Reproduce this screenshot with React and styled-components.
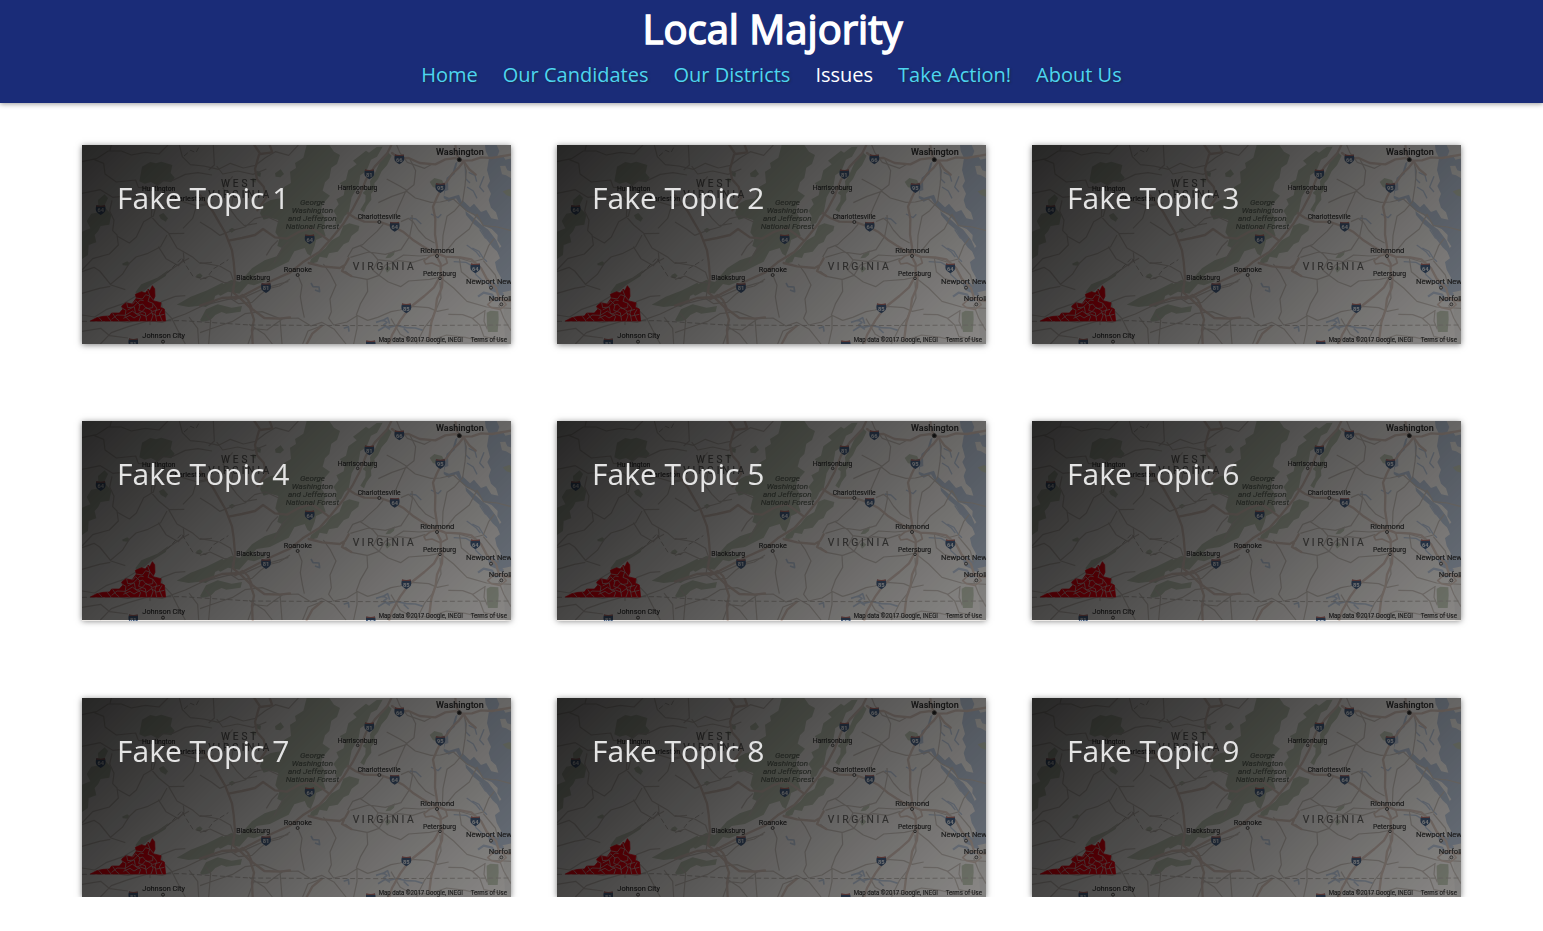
import React from 'react';
import styled, { createGlobalStyle } from 'styled-components';

const GlobalStyle = createGlobalStyle`
  *, *::before, *::after { box-sizing: border-box; }
  body {
    margin: 0;
    background: #fff;
    font-family: 'Open Sans', 'Noto Sans', sans-serif;
    overflow: hidden;
  }
`;

const Header = styled.header`
  display: flex;
  flex-direction: column;
  align-items: center;
  height: 103px;
  background: #1a2c78;
  box-shadow: 0 1px 5px rgba(0, 0, 0, 0.4);
`;

const SiteTitle = styled.h1`
  margin: 0;
  padding-left: 2px;
  font-size: 40px;
  font-weight: 400;
  line-height: 58px;
  color: #fff;
  -webkit-text-stroke: 1.5px #fff;
`;

const Nav = styled.nav`
  display: flex;
  gap: 25px;
  padding-top: 3px;
`;

const NavLink = styled.a`
  font-size: 20px;
  line-height: 28px;
  text-decoration: none;
  color: ${({ $active }) => ($active ? '#fff' : '#4dd5f0')};
  text-shadow: ${({ $active }) => ($active ? 'none' : '1px 1px 2px rgba(30, 40, 50, 0.7)')};
`;

const TopicGrid = styled.main`
  display: grid;
  grid-template-columns: repeat(3, 429px);
  justify-content: center;
  column-gap: 46px;
  row-gap: 77.4px;
  padding-top: 42px;
`;

const TopicCard = styled.article`
  display: grid;
  grid-template-rows: 199px;
  height: 199px;
  box-shadow: 0 1px 6px rgba(0, 0, 0, 0.5);

  & > * { grid-area: 1 / 1; }
`;

const MapImage = styled.svg`
  display: block;
  width: 429px;
  height: ${({ $height }) => $height}px;
  overflow: hidden;
`;

const MapInk = styled.g`
  filter: blur(0.9px);
`;

const Shade = styled.div`
  z-index: 1;
  padding: 32px 35px;
  background: linear-gradient(135deg, rgba(0, 0, 0, 0.84), rgba(0, 0, 0, 0.42));
`;

const TopicName = styled.h2`
  margin: 0;
  font-size: 30px;
  font-weight: 400;
  line-height: 42px;
  color: #e4e4e4;
`;

const MapLabel = styled.text`
  font-family: Roboto, sans-serif;
  font-size: ${({ $size = 22.5 }) => $size}px;
  font-weight: ${({ $bold }) => ($bold ? 500 : 400)};
  font-style: ${({ $italic }) => ($italic ? 'italic' : 'normal')};
  letter-spacing: ${({ $spacing = 0 }) => $spacing}px;
  fill: ${({ $fill = '#333' }) => $fill};
  stroke: ${({ $fill = '#333' }) => $fill};
  stroke-width: 0.4px;
`;

const shields = [
  [56, 194, '64'], [154, 594, '81'], [552, 428, '81'], [683, 282, '64'],
  [862, 87, '81'], [952, 42, '66'], [938, 244, '64'], [1075, 128, '95'],
  [1180, 369, '64'], [973, 489, '85'], [866, 600, '85'],
];

function Shield({ x, y, n }) {
  return (
    <g transform={`translate(${x} ${y})`}>
      <path d="M-13-13Q0-9 13-13Q17 0 12 7Q8 12 0 16Q-8 12-12 7Q-17 0-13-13Z" fill="#4a6284" />
      <path d="M-13-14Q0-10 13-14V-9H-13Z" fill="#b3706c" />
      <text y="8" textAnchor="middle" fontFamily="Roboto, sans-serif" fontSize="17" fontWeight="700" fill="#e5e8eb">{n}</text>
    </g>
  );
}

function RegionMap({ height }) {
  return (
    <MapImage $height={height} viewBox={`0 0 1287 ${height * 3}`} preserveAspectRatio="none" aria-hidden="true">
      <rect width="1287" height="600" fill="#edeae7" />
      <MapInk>
        <g fill="#bdc4b3">
          <path d="M180 65L205 51L222 55L238 50L271 60L266 84L278 98L268 112L245 108L228 122L207 111L188 116L172 109Z" />
          <path d="M48 165L68 148L78 159L66 185L88 208L82 239L56 243L48 259L38 270L43 292L20 300L18 330L0 342V260L25 250L14 228L28 206L50 202Z" />
          <path d="M231 211L244 204L258 220L251 230L236 221Z" />
          <path d="M120 356L136 349L142 354L137 362L123 361Z" />
          <path d="M343 390L354 385L362 392L354 401L344 398Z" />
          <path d="M160 442L178 418L226 398L258 376L251 393L207 421L188 437L166 447Z" />
          <path d="M674 0H742L756 20L774 30L765 57L748 68L742 99L729 112L722 137L744 152L722 177L716 198L731 223L724 251L731 272L702 285L698 303L686 333L676 326L668 309L637 319L620 350L595 362L564 378L524 384L511 398L530 407L543 400L549 409L516 421L498 417L472 446L438 440L415 452L402 444L396 465L371 471L354 475L340 468L397 430L448 405L474 411L510 370L548 346L584 334L600 309L586 303L592 280L580 262L589 225L565 218L545 224L534 205L544 177L566 165L595 160L607 125L627 114L624 80L642 69L639 54L664 38Z" />
          <path d="M829 35L852 17L861 23L884 6L902 5L885 35L867 44L853 79L835 91L830 120L809 157L800 203L788 213L777 235L760 239L764 213L754 198L770 178L763 163L785 151L789 128L773 115L792 104L799 76L824 58L813 47Z" />
          <path d="M894 50L917 21L929 32L915 61L899 79L888 102L877 115L879 132L867 147L868 164L854 183L846 202L835 194L850 169L851 151L842 144L865 122L864 109L878 86Z" />
          <path d="M784 242L802 235L832 243L829 257L809 272L800 291L785 298L767 320L741 325L735 339L713 335L706 351L682 358L687 342L730 310L747 287L772 273Z" />
          <path d="M354 526L372 493L407 478L449 488L480 483L476 500L433 506L419 501L400 510L385 526L362 530Z" />
          <path d="M284 479L326 455L376 436L421 413L431 425L406 450L375 461L400 469L371 486L353 482L320 486Z" />
          <path d="M524 77L537 83L535 96L522 90ZM512 98L523 103L520 113L509 107ZM579 85L596 73L606 87L595 97L581 95ZM440 255L450 248L461 254L449 263Z" />
          <path d="M919 327L939 316L936 329L925 338L910 340ZM909 370L919 363L928 371L915 383Z" />
          <path d="M1043 111L1057 99L1080 105L1089 122L1071 130L1053 127Z" />
          <path d="M1214 503L1225 497L1249 499L1250 523L1247 561L1218 561L1215 546Z" />
        </g>

        <g fill="#b7c3d4">
          <path d="M1209 0H1290V600L1282 596L1280 552L1273 485L1258 450L1223 435L1218 416L1231 405L1246 421L1257 398L1244 374L1239 351L1254 340L1245 318L1258 304L1246 286L1247 270L1229 252L1207 243L1187 222L1168 204L1150 196L1135 180L1141 165L1164 187L1176 176L1197 201L1213 195L1228 220L1249 224L1242 202L1227 188L1220 165L1227 146L1216 123L1224 108L1215 75L1221 39L1211 18Z" />
          <path d="M1127 49L1118 87L1098 104L1099 135L1089 139L1086 152L1101 158L1131 149L1142 178L1137 184L1122 160L1100 170L1085 159L1087 128L1094 98L1111 84L1120 54Z" />
          <path d="M1150 198Q1180 222 1197 238L1219 254L1243 286L1256 315L1253 326L1233 308L1208 276L1197 255L1175 237L1152 210Z" />
        </g>
        <path d="M1244 0L1252 18L1246 34L1262 30L1270 44L1290 40V0ZM1254 63L1270 62L1276 76L1290 80V101L1272 91L1260 88ZM1262 442L1290 436V600H1270Z" fill="#e4e2df" />
        <path d="M1262 139L1282 132L1290 137V157L1272 150Z" fill="#bdc4b3" />

        <g fill="none" stroke="#b9c5d6" strokeWidth="4" strokeLinejoin="round">
          <path d="M1047 207L1068 218L1078 208M983 219L1002 222L1018 237M1206 94L1193 126L1206 141M1155 126L1174 138L1185 160M1150 65L1151 101L1164 114M1160 82L1179 91L1184 110M1171 309L1191 319L1204 340L1215 350M1115 350L1152 352L1174 365L1182 389L1202 407L1219 417M1193 253L1210 279L1244 294M1154 300L1183 321L1195 336" />
          <path d="M687 414L693 425L711 426L713 440L699 435M882 532L904 525L915 532L905 540L921 547L943 541L973 548L1000 549L1023 556M901 527L917 518L923 536M785 550L799 545L801 560M888 557L910 544L924 553M965 550L980 564" strokeWidth="5" />
          <path d="M1188 455L1205 443L1230 449L1240 466L1267 464M1235 422L1249 447L1265 448" strokeWidth="7" />
        </g>

        <g fill="none" stroke="#c6bfb9" strokeWidth="3.6" strokeLinejoin="round">
          <path d="M0 50L43 41L79 18L118 18L148 30L190 22L231 27L258 0M84 17L88 0M37 44L65 55L69 87L103 111L161 105L169 127L215 129L239 108L272 106L310 88L348 83L390 90" />
          <path d="M0 145L55 134L92 157L122 154L142 160L179 148L206 162L211 183L257 180L292 167L350 184L396 174M90 166L83 198L96 226L92 257L105 270L109 300L82 327L32 341L0 375M106 274L142 294L163 276L185 230L214 213L221 188M210 182L208 215L230 240L262 266L307 265M260 266L285 309L333 337L354 355L390 352" />
          <path d="M0 380L36 367L53 378L87 420L130 434M84 419L121 388L142 355L162 336L198 325L236 305L255 270M0 445L52 430L85 424M229 305L252 341L289 362L306 342L304 322M303 250L332 220L344 181L390 173" />
          <path d="M0 510L38 516L72 494L126 475L162 453L201 420L258 380L299 352L321 340M27 528L90 525L137 532L181 524L240 532L310 507L362 482L438 463L484 458L545 431L619 409" />
          <path d="M55 597L88 563L139 545L204 526L250 500L270 521L287 555L310 597M0 559L56 550L83 572L138 579M204 540L204 518L220 499M242 501L238 470L280 454L310 452M321 516L347 550L350 597M292 0L301 35L325 59L365 63L410 73L445 55L484 69L520 61L550 38L580 20L620 31L649 0" />
          <path d="M394 0L397 60L380 75M404 63L422 87L467 78L513 88L553 72M452 94L423 130L452 159L447 196L465 220L487 242L525 235M354 231L388 252L413 271L449 257L489 246L518 221L551 213L590 231" />
          <path d="M354 353L413 363L446 382L455 409M354 403L384 393L425 412L460 414M553 331L570 304L588 286M576 353L600 310L619 290M452 422L447 461L470 476L510 472L537 447L560 431L592 423L624 402" />
          <path d="M650 396L660 421L655 455L661 490L667 518M724 357L744 385L762 420L744 462L748 500L740 520L755 540L795 531L825 512L825 550L815 597M790 379L808 394L855 403L857 439L836 475L823 510L857 526L887 517L927 500L954 495L990 484L1040 488L1066 499L1100 492M855 404L891 391L919 411L956 425L980 408L1043 403L1090 393" />
          <path d="M797 336L812 310L842 299L858 283L885 259L904 237M835 302L872 326L888 345L873 376L891 391L910 360L950 347L992 352L1030 340M886 344L933 350L965 330L1013 333L1048 330M805 337L860 321L910 328L957 314L983 274L991 234L990 210M937 217L950 186L973 135L953 123L914 102M944 0L953 22L976 52L1028 70L1047 59M889 173L930 154L974 139L1000 159L1047 172L1075 171L1114 162L1153 197L1191 216" />
          <path d="M973 137L996 119L1001 77L984 43M957 230L979 220L994 231L1009 255L1032 280L1058 294M1081 323L1083 271L1095 214L1118 197L1142 169L1149 122L1153 78L1144 47M1093 318L1121 284L1162 252L1185 208L1204 242L1246 246L1287 257M1088 336L1131 339L1170 351L1204 342L1220 302L1237 280" />
          <path d="M1132 339L1138 380L1163 401L1196 411M1204 347L1240 390L1249 424M1080 401L1115 429L1155 469L1214 486L1287 490M1074 410L1077 459L1063 492L1050 519L1027 548L1003 597M1099 508L1142 509L1173 520L1211 496M1170 519L1193 540L1206 575L1263 587M1209 495L1206 529L1216 553M1250 480L1265 519L1287 557M927 521L955 568L985 585L1038 588L1094 570L1150 577L1197 588" />
          <path d="M498 597L515 551L555 555L602 521L648 519L687 543L719 532L757 553L792 597M662 597L678 558L713 545M571 597L548 568L501 538M370 505L386 526L380 597M354 563L402 546L450 530L489 506L540 500L594 521L600 597" />
        </g>

        <g fill="none" stroke="#d2c1b8" strokeWidth="7" strokeLinecap="round" strokeLinejoin="round">
          <path d="M517 0L535 27L571 22L563 0M531 29L519 72L525 103L545 125L553 158L526 196M354 151L391 197L410 230L430 264L440 290L450 316L455 350L459 398L453 442L475 460L504 488L516 524L510 554L512 597" />
          <path d="M440 287L480 279L519 270L543 252L579 277L615 281L650 261L689 249L720 271L741 287M354 482L420 459L475 456L525 430L574 405L625 382L662 352L712 321L745 284L783 238L811 194L833 152L852 104L878 65L915 26L928 0" />
          <path d="M797 205L820 219L847 230L895 231L932 244L963 260L992 284L1020 302L1050 320L1090 335L1135 337L1168 343L1197 369L1214 401L1242 429L1252 462L1287 468" />
          <path d="M930 24L952 40L980 39L1013 54L1060 58L1090 43L1121 39L1145 49L1131 67L1111 86L1095 110L1081 124L1064 159L1053 185L1060 221L1059 268L1065 306L1064 334L1076 357L1076 391L1056 427L1027 453L982 489L955 526L930 570L922 597" />
          <path d="M1120 0L1123 28L1137 47L1170 46L1197 37L1230 39L1287 29M1145 49L1162 73L1181 89M1082 390L1080 427L1065 461L1061 493L1048 533L1042 580M800 340L789 360L773 369L720 364L680 354M786 366L780 378L808 393M460 463L482 450L498 465L510 492L547 519L592 521L624 517M720 542L691 566L674 597" />
          <path d="M1026 347L1044 333L1068 326L1091 336L1096 354L1075 365L1050 354L1031 357ZM1217 479L1234 463L1257 459L1273 479L1254 493L1228 488Z" strokeWidth="5" />
        </g>

        <g fill="none" stroke="#b3ada8" strokeWidth="2.8" strokeDasharray="15 8">
          <path d="M0 529L300 527L504 540L660 541L894 542L1287 540" />
          <path d="M255 385L300 338L310 358L333 394L372 401L395 371L439 344M306 33L326 16L342 23L354 0" />
        </g>

        <path d="M25 528L44 518L63 514L82 513L89 504L112 504L122 493L119 483L132 473L150 477L163 459L160 448L179 440L190 444L199 432L203 438L211 422L218 431L219 454L213 467L237 473L235 487L247 492L251 528Z" fill="#fb0010" stroke="#fb0010" strokeWidth="2" />
        <path d="M50 517L60 528M76 514L87 528M92 505L101 519L112 528M120 489L132 496L129 514L143 528M134 473L137 488L157 486L160 503L176 514L171 528M151 478L161 467L174 480L170 496L190 503L194 527M163 459L181 462L191 449L203 453L198 469L213 475L212 488L194 491L182 477L170 481M197 435L204 453L214 465M89 523L105 510L130 511L151 498L164 508L181 499L192 487L212 499L234 493M124 520L144 511L156 519L176 507L193 514L208 503L224 513L247 508M137 495L153 487L175 465L185 467M213 475L224 490L219 505L224 528M240 493L232 507L241 528M207 528L213 512L208 499" fill="none" stroke="#dfaaa9" strokeWidth="2.6" />

        {shields.map(([x, y, n]) => <Shield key={`${x}-${y}`} x={x} y={y} n={n} />)}

        <g fill="#dedbd8" stroke="#555250" strokeWidth="3">
          <circle cx="1132" cy="44" r="6" fill="#242424" />
          <circle cx="892" cy="231" r="4.5" />
          <circle cx="827" cy="142" r="4" />
          <circle cx="1065" cy="333" r="4.5" />
          <circle cx="1074" cy="400" r="4" />
          <circle cx="1227" cy="428" r="4.5" />
          <circle cx="1258" cy="478" r="4.5" />
          <circle cx="647" cy="390" r="4.5" />
          <circle cx="243" cy="590" r="4.5" />
        </g>

        <MapLabel x="1062" y="30" $size={26} $bold textLength="143" lengthAdjust="spacingAndGlyphs">Washington</MapLabel>
        <MapLabel x="180" y="139" textLength="100" lengthAdjust="spacingAndGlyphs">Huntington</MapLabel>
        <MapLabel x="264" y="169" textLength="106" lengthAdjust="spacingAndGlyphs">Charleston</MapLabel>
        <MapLabel x="417" y="125" $size={30} $spacing={4} $fill="#666462" textLength="110">WEST</MapLabel>
        <MapLabel x="379" y="159" $size={30} $spacing={4} $fill="#666462" textLength="187">VIRGINIA</MapLabel>
        <MapLabel x="812" y="374" $size={31} $spacing={5} $fill="#666462" textLength="188">VIRGINIA</MapLabel>
        <MapLabel x="767" y="134" textLength="119" lengthAdjust="spacingAndGlyphs">Harrisonburg</MapLabel>
        <MapLabel x="827" y="222" textLength="129" lengthAdjust="spacingAndGlyphs">Charlottesville</MapLabel>
        <MapLabel x="1015" y="323" $size={24} textLength="102" lengthAdjust="spacingAndGlyphs">Richmond</MapLabel>
        <MapLabel x="1023" y="392" textLength="99" lengthAdjust="spacingAndGlyphs">Petersburg</MapLabel>
        <MapLabel x="1152" y="418" $size={24} textLength="150" lengthAdjust="spacingAndGlyphs">Newport News</MapLabel>
        <MapLabel x="1220" y="467" $size={24} textLength="76" lengthAdjust="spacingAndGlyphs">Norfolk</MapLabel>
        <MapLabel x="605" y="381" textLength="85" lengthAdjust="spacingAndGlyphs">Roanoke</MapLabel>
        <MapLabel x="463" y="406" textLength="101" lengthAdjust="spacingAndGlyphs">Blacksburg</MapLabel>
        <MapLabel x="181" y="580" $size={24} textLength="128" lengthAdjust="spacingAndGlyphs">Johnson City</MapLabel>
        <MapLabel x="654" y="180" $italic $fill="#5d655a" textLength="75" lengthAdjust="spacingAndGlyphs">George</MapLabel>
        <MapLabel x="629" y="204" $italic $fill="#5d655a" textLength="124" lengthAdjust="spacingAndGlyphs">Washington</MapLabel>
        <MapLabel x="618" y="228" $italic $fill="#5d655a" textLength="146" lengthAdjust="spacingAndGlyphs">and Jefferson</MapLabel>
        <MapLabel x="611" y="251" $italic $fill="#5d655a" textLength="160" lengthAdjust="spacingAndGlyphs">National Forest</MapLabel>
        <MapLabel x="890" y="592" $size={20} textLength="253" lengthAdjust="spacingAndGlyphs">Map data ©2017 Google, INEGI</MapLabel>
        <MapLabel x="1166" y="592" $size={20} textLength="109" lengthAdjust="spacingAndGlyphs">Terms of Use</MapLabel>
      </MapInk>
    </MapImage>
  );
}

const links = ['Home', 'Our Candidates', 'Our Districts', 'Issues', 'Take Action!', 'About Us'];
const topics = Array.from({ length: 9 }, (_, i) => ({
  name: `Fake Topic ${i + 1}`,
  mapHeight: i >= 3 && i < 6 ? 200 : 199,
}));

export default function App() {
  return (
    <>
      <GlobalStyle />
      <Header>
        <SiteTitle>Local Majority</SiteTitle>
        <Nav>
          {links.map((label) => (
            <NavLink key={label} $active={label === 'Issues'}>{label}</NavLink>
          ))}
        </Nav>
      </Header>
      <TopicGrid>
        {topics.map(({ name, mapHeight }) => (
          <TopicCard key={name}>
            <RegionMap height={mapHeight} />
            <Shade>
              <TopicName>{name}</TopicName>
            </Shade>
          </TopicCard>
        ))}
      </TopicGrid>
    </>
  );
}
